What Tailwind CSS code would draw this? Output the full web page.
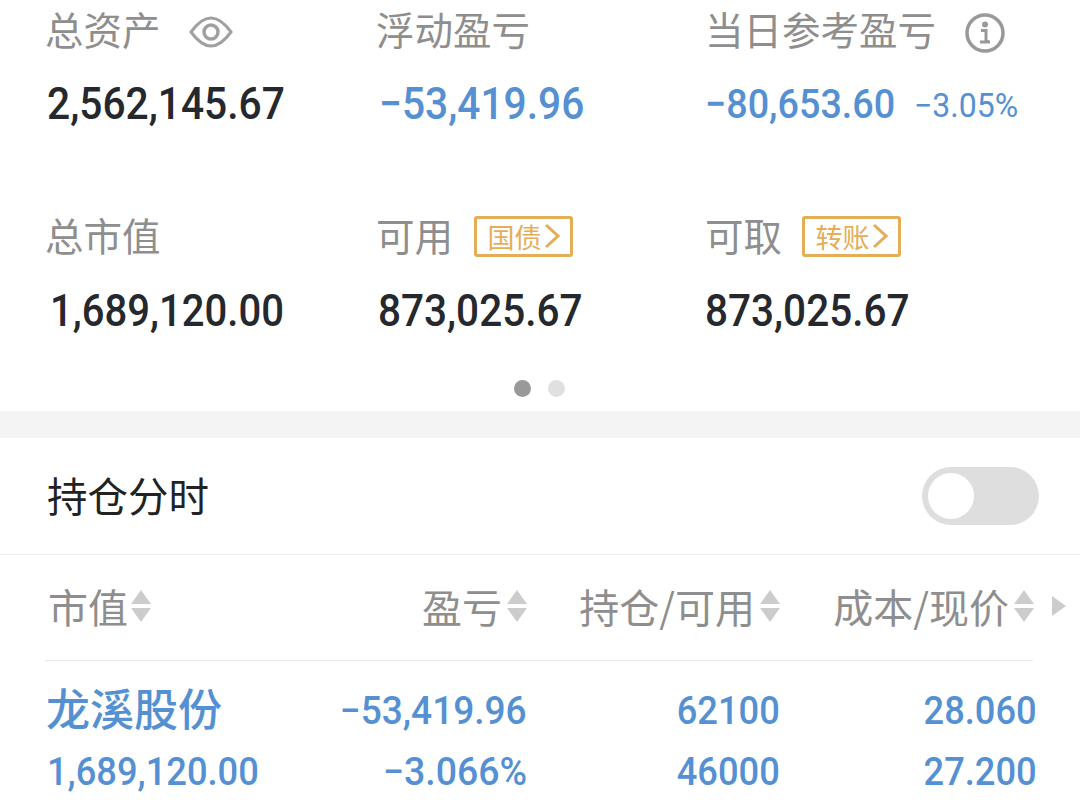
<!DOCTYPE html>
<html lang="zh-CN">
  <head>
    <meta charset="UTF-8" />
    <meta name="viewport" content="width=device-width, initial-scale=1.0" />
    <title>持仓</title>
    <script src="https://cdn.jsdelivr.net/npm/@tailwindcss/browser@4"></script>
  </head>
  <body class="w-[1080px] h-[810px] overflow-hidden bg-white font-['Noto_Sans_CJK_SC','Noto_Sans',sans-serif]">
    <!-- 资产概览 -->
    <section class="h-[411px] pl-[45px] flex flex-col">
      <div class="grid grid-cols-[331px_329px_1fr]">
        <div class="h-[56px] flex items-center text-[38.5px] leading-none text-[#8e8e8e]">
          总资产
          <svg viewBox="0 0 44 34" class="w-[44px] h-[34px] ml-[28px] mt-[8px]" fill="none" stroke="#a0a0a0" stroke-width="3">
            <path d="M2 17C10 6 16 3 22 3s12 3 20 14C34 28 28 31 22 31S10 28 2 17z" />
            <circle cx="22" cy="17" r="7" stroke-width="3.5" />
          </svg>
        </div>
        <div class="h-[56px] flex items-center text-[38.5px] leading-none text-[#8e8e8e]">浮动盈亏</div>
        <div class="h-[56px] flex items-center text-[38.5px] leading-none text-[#8e8e8e]">
          当日参考盈亏
          <svg viewBox="0 0 40 40" class="w-[40px] h-[40px] ml-[29px] mt-[10px]" fill="none">
            <circle cx="20" cy="20" r="18" stroke="#999" stroke-width="3.5" />
            <circle cx="20" cy="11.5" r="3" fill="#999" />
            <path d="M16 17.5h5v11h3M15 29h10" stroke="#999" stroke-width="3" />
          </svg>
        </div>

        <div class="h-[148px] pt-[20px] pl-[2px] text-[45px] leading-[56px] font-medium font-['Roboto',sans-serif] text-[#25282d]">
          <span class="inline-block origin-left scale-x-[0.905]">2,562,145.67</span>
        </div>
        <div class="h-[148px] pt-[20px] pl-[3px] text-[45px] leading-[56px] font-medium font-['Roboto',sans-serif] text-[#5590d2]">
          <span class="inline-block origin-left scale-x-[0.905]">−53,419.96</span>
        </div>
        <div class="h-[148px] pt-[20px] flex items-start font-medium font-['Roboto',sans-serif] text-[#5590d2]">
          <span class="inline-block w-[209px] shrink-0 text-[41px] leading-[56px] origin-left scale-x-[0.92] whitespace-nowrap">−80,653.60</span>
          <span class="inline-block text-[33px] leading-[60px] font-normal origin-left scale-x-[0.97] whitespace-nowrap">−3.05%</span>
        </div>

        <div class="h-[60px] flex items-center text-[38.5px] leading-none text-[#8e8e8e]">总市值</div>
        <div class="h-[60px] flex items-center text-[38.5px] leading-none text-[#8e8e8e]">
          可用
          <span class="ml-[21px] mt-[4px] w-[99px] h-[41px] border-[3px] border-[#e5ad56] rounded-[3px] flex items-center justify-center text-[27px] text-[#e5ad56]">
            国债
            <svg viewBox="0 0 16 26" class="w-[16px] h-[26px] ml-[2px]" fill="none" stroke="#e5ad56" stroke-width="3"><path d="M2 2l12 11L2 24" /></svg>
          </span>
        </div>
        <div class="h-[60px] flex items-center text-[38.5px] leading-none text-[#8e8e8e]">
          可取
          <span class="ml-[20px] mt-[4px] w-[99px] h-[41px] border-[3px] border-[#e5ad56] rounded-[3px] flex items-center justify-center text-[27px] text-[#e5ad56]">
            转账
            <svg viewBox="0 0 16 26" class="w-[16px] h-[26px] ml-[2px]" fill="none" stroke="#e5ad56" stroke-width="3"><path d="M2 2l12 11L2 24" /></svg>
          </span>
        </div>

        <div class="pt-[19px] pl-[5px] text-[45px] leading-[56px] font-medium font-['Roboto',sans-serif] text-[#25282d]">
          <span class="inline-block origin-left scale-x-[0.89]">1,689,120.00</span>
        </div>
        <div class="pt-[19px] pl-[2px] text-[45px] leading-[56px] font-medium font-['Roboto',sans-serif] text-[#25282d]">
          <span class="inline-block origin-left scale-x-[0.9]">873,025.67</span>
        </div>
        <div class="pt-[19px] text-[45px] leading-[56px] font-medium font-['Roboto',sans-serif] text-[#25282d]">
          <span class="inline-block origin-left scale-x-[0.9]">873,025.67</span>
        </div>
      </div>
      <div class="mt-[41px] -ml-[45px] pr-[2px] flex justify-center gap-[17px]">
        <div class="w-[17px] h-[17px] rounded-full bg-[#999999]"></div>
        <div class="w-[17px] h-[17px] rounded-full bg-[#e0e0e0]"></div>
      </div>
    </section>

    <div class="h-[27px] bg-[#f4f4f4]"></div>

    <!-- 持仓分时 -->
    <section class="h-[117px] pl-[47px] pr-[41px] flex items-center justify-between border-b border-[#eeeeee]">
      <h2 class="text-[40.5px] leading-none text-[#222222] -mt-[2px]">持仓分时</h2>
      <div class="w-[117px] h-[58px] rounded-full bg-[#dedede] p-[6px]">
        <div class="w-[46px] h-[46px] rounded-full bg-white"></div>
      </div>
    </section>

    <!-- 持仓列表 -->
    <section>
      <div class="h-[105px] pb-[4px] pl-[48px] grid grid-cols-[239px_240px_253px_254px_1fr] items-center text-[40px] leading-none text-[#8e8e8e]">
        <div class="flex items-center">
          市值
          <svg viewBox="0 0 20 32" class="w-[20px] h-[32px] ml-[3px]" fill="#cccccc"><path d="M10 0l10 14H0zM0 18h20L10 32z" /></svg>
        </div>
        <div class="flex items-center justify-end">
          盈亏
          <svg viewBox="0 0 20 32" class="w-[20px] h-[32px] ml-[5px]" fill="#cccccc"><path d="M10 0l10 14H0zM0 18h20L10 32z" /></svg>
        </div>
        <div class="flex items-center justify-end whitespace-nowrap">
          持仓/可用
          <svg viewBox="0 0 20 32" class="w-[20px] h-[32px] ml-[5px]" fill="#cccccc"><path d="M10 0l10 14H0zM0 18h20L10 32z" /></svg>
        </div>
        <div class="flex items-center justify-end whitespace-nowrap">
          成本/现价
          <svg viewBox="0 0 20 32" class="w-[20px] h-[32px] ml-[5px]" fill="#cccccc"><path d="M10 0l10 14H0zM0 18h20L10 32z" /></svg>
        </div>
        <div class="pl-[18px]">
          <svg viewBox="0 0 14 20" class="w-[14px] h-[20px]" fill="#cccccc"><path d="M0 0l14 10L0 20z" /></svg>
        </div>
      </div>
      <div class="ml-[45px] mr-[47px] h-px bg-[#e8e8e8]"></div>
      <div class="pl-[46px] pt-[20px] grid grid-cols-[241px_240px_253px_257px] text-[#5590d2] font-medium font-['Roboto',sans-serif] text-[39px] leading-[61px]">
        <div class="font-['Noto_Sans_CJK_SC',sans-serif] font-medium text-[44px] leading-[52px]">龙溪股份</div>
        <div class="text-right"><span class="inline-block origin-right scale-x-[0.95]">−53,419.96</span></div>
        <div class="text-right"><span class="inline-block origin-right scale-x-[0.93]">62100</span></div>
        <div class="text-right"><span class="inline-block origin-right scale-x-[0.93]">28.060</span></div>
        <div class="pl-[1px]"><span class="inline-block origin-left scale-x-[0.93] whitespace-nowrap">1,689,120.00</span></div>
        <div class="text-right"><span class="inline-block origin-right scale-x-[0.96]">−3.066%</span></div>
        <div class="text-right"><span class="inline-block origin-right scale-x-[0.93]">46000</span></div>
        <div class="text-right"><span class="inline-block origin-right scale-x-[0.93]">27.200</span></div>
      </div>
    </section>
  </body>
</html>
